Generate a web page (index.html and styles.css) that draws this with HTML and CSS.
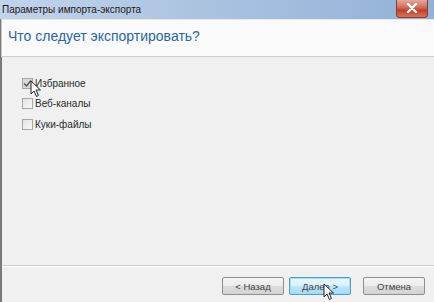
FILE: index.html
```html
<!DOCTYPE html>
<html lang="ru">
<head>
<meta charset="utf-8">
<link rel="stylesheet" href="styles.css">
</head>
<body>
<div class="window">
  <div class="titlebar">
    <span class="title">Параметры импорта-экспорта</span>
    <div class="close"><svg width="12" height="10" viewBox="0 0 12 10"><path d="M2 1 L10 9 M10 1 L2 9" stroke="#fff" stroke-width="2.4" stroke-linecap="round"/></svg></div>
  </div>
  <div class="frame">
    <div class="header">Что следует экспортировать?</div>
    <div class="main">
      <label class="opt"><span class="box checked"><svg width="9" height="9" viewBox="0 0 9 9"><path d="M1 4.5 L3.5 7 L8 1.5" fill="none" stroke="#555" stroke-width="1.3"/></svg></span>Избранное</label>
      <label class="opt"><span class="box"></span>Веб-каналы</label>
      <label class="opt"><span class="box"></span>Куки-файлы</label>
      <svg class="cursor c1" width="12" height="18" viewBox="0 0 12 18"><path d="M1 1 L1 14 L4 11 L6.5 16.5 L8.5 15.5 L6 10 L10.5 10 Z" fill="#fff" stroke="#222" stroke-width="1"/></svg>
    </div>
    <div class="footer">
      <button class="btn">&lt; Назад</button>
      <button class="btn primary">Далее &gt;</button>
      <button class="btn cancel">Отмена</button>
      <svg class="cursor c2" width="12" height="18" viewBox="0 0 12 18"><path d="M1 1 L1 14 L4 11 L6.5 16.5 L8.5 15.5 L6 10 L10.5 10 Z" fill="#fff" stroke="#222" stroke-width="1"/></svg>
    </div>
  </div>
</div>
</body>
</html>
```
FILE: styles.css
```css
html, body {
  margin: 0;
  padding: 0;
}
body {
  width: 434px;
  height: 302px;
  overflow: hidden;
  font-family: "Liberation Sans", Arial, sans-serif;
  background: #f0f0f0;
}
.window {
  display: flex;
  flex-direction: column;
  height: 302px;
}
.titlebar {
  height: 19px;
  flex: none;
  display: flex;
  align-items: center;
  justify-content: space-between;
  background: linear-gradient(90deg, #c2d4ea 0%, #aec5e1 40%, #9dbadc 75%, #92b2d9 100%);
  position: relative;
}
.title {
  font-size: 10px;
  color: #1a1a1a;
  padding-left: 2px;
  margin-top: -1px;
}
.close {
  width: 30px;
  height: 17px;
  margin-right: 6px;
  margin-top: -2px;
  border-radius: 0 0 4px 4px;
  background: linear-gradient(180deg, #e4a99a 0%, #d06a56 45%, #c23f2a 60%, #d7735c 100%);
  border: 1px solid #8e3a2c;
  border-top: none;
  display: flex;
  align-items: center;
  justify-content: center;
}
.frame {
  flex: 1;
  display: flex;
  flex-direction: column;
  border-left: 2px solid #7a7a7a;
}
.header {
  height: 38px;
  flex: none;
  background: #fafafa;
  border-bottom: 1px solid #d0d0d0;
  font-size: 14px;
  color: #2b66a3;
  padding: 8px 0 0 6px;
  box-sizing: border-box;
  margin-left: -1px;
  border-left: 1px solid #c8c8c8;
  border-top: 1px solid #e8e8e8;
}
.main {
  flex: 1;
  position: relative;
  padding: 20px 0 0 20px;
  display: flex;
  flex-direction: column;
  gap: 8.5px;
  border-bottom: 1px solid #cdcdcd;
  box-shadow: 0 1px 0 #ffffff;
}
.opt {
  display: flex;
  align-items: center;
  font-size: 10px;
  color: #2a2a2a;
  height: 12px;
}
.box {
  width: 11px;
  height: 11px;
  box-sizing: border-box;
  border: 1px solid #a8a8a8;
  background: linear-gradient(135deg, #e2e2e2, #f8f8f8);
  margin-right: 2px;
  display: flex;
  align-items: center;
  justify-content: center;
}
.box.checked {
  background: #d8d8d8;
}
.footer {
  height: 36px;
  flex: none;
  display: flex;
  align-items: flex-start;
  padding: 11px 0 0 220px;
  position: relative;
  box-sizing: border-box;
}
.btn {
  width: 62px;
  height: 18px;
  font-family: inherit;
  font-size: 9.5px;
  color: #444;
  border: 1px solid #8e8e8e;
  border-radius: 2px;
  background: linear-gradient(180deg, #f4f4f4 0%, #ebebeb 50%, #dcdcdc 51%, #d4d4d4 100%);
  padding: 0;
  margin-right: 5px;
}
.btn.primary {
  border-color: #4f9fc9;
  background: linear-gradient(180deg, #eaf6fd 0%, #d9f0fc 50%, #bee6fd 51%, #a7d9f5 100%);
  box-shadow: inset 0 0 0 1px #9fdcf5;
  margin-right: 12px;
}
.cursor {
  position: absolute;
}
.c1 {
  left: 28px;
  top: 23px;
}
.c2 {
  left: 321px;
  top: 17px;
}
```
